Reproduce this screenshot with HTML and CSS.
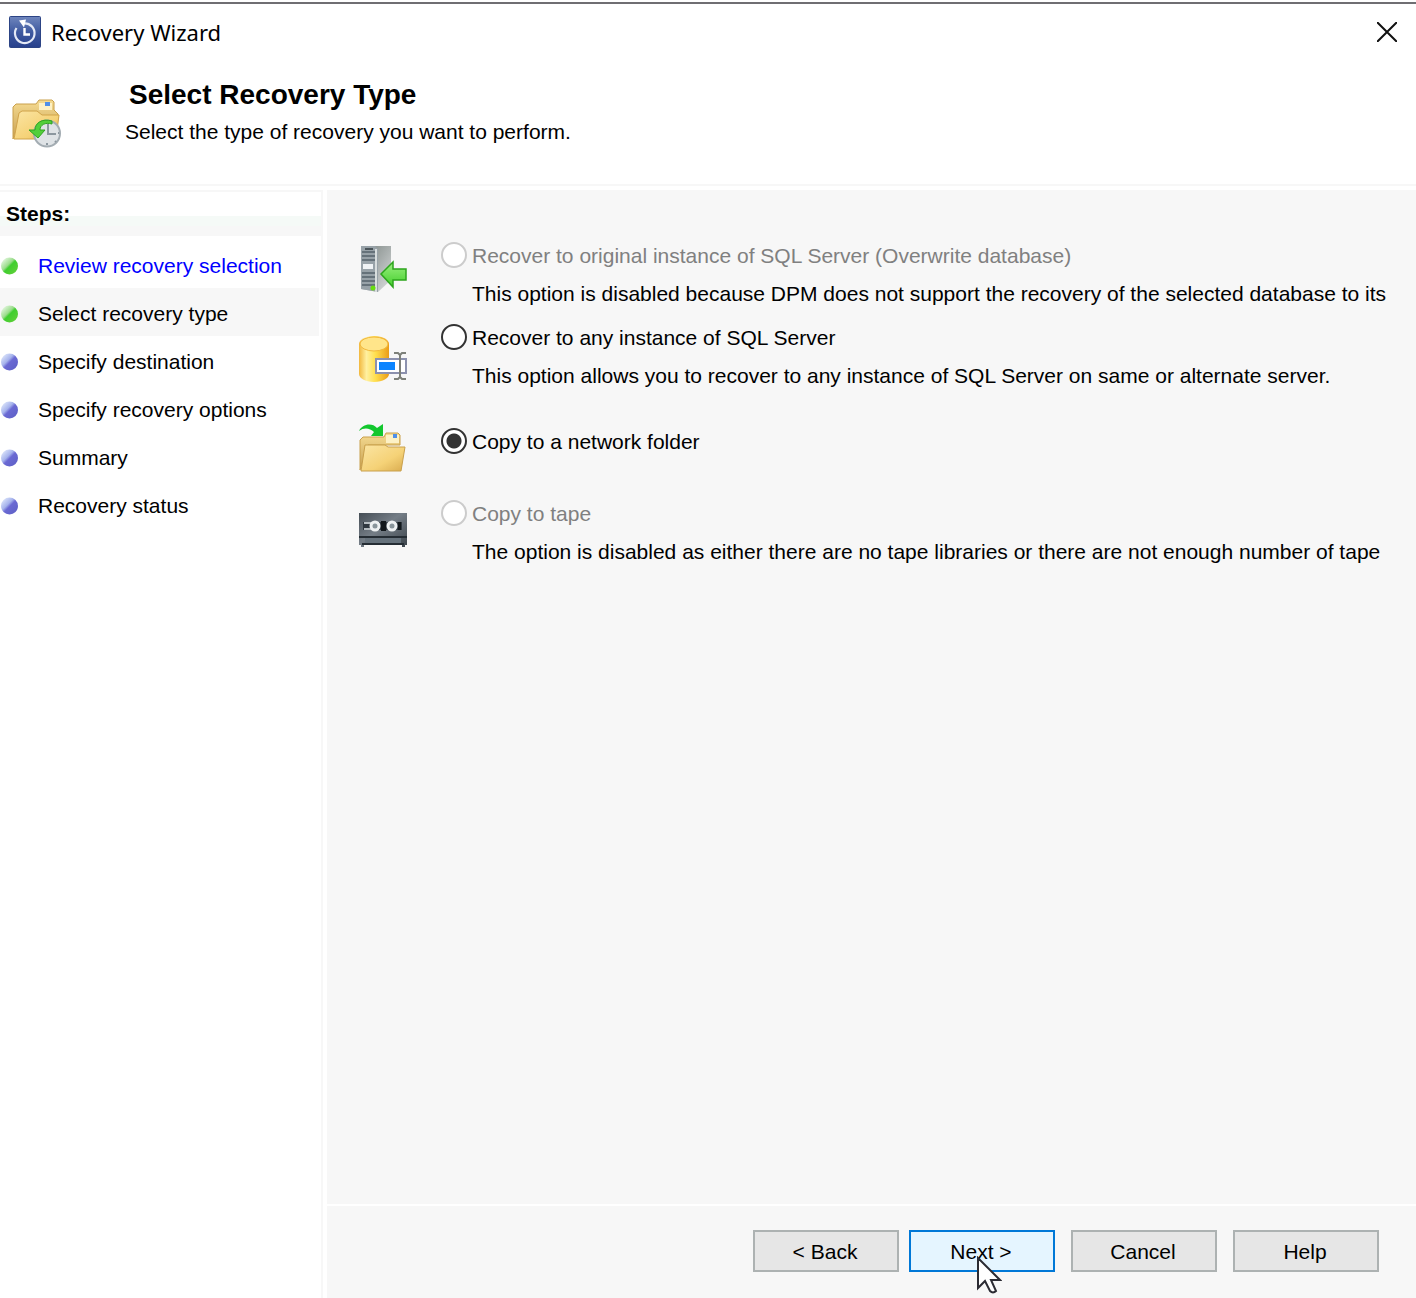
FILE: index.html
```html
<!DOCTYPE html>
<html lang="en">
<head>
<meta charset="utf-8">
<title>Recovery Wizard</title>
<link rel="stylesheet" href="styles.css">
</head>
<body>
<svg class="defs" width="0" height="0" aria-hidden="true">
  <defs>
    <linearGradient id="navy" x1="0" y1="0" x2="0" y2="1"><stop offset="0" stop-color="#6f86bd"/><stop offset=".5" stop-color="#3f5aa0"/><stop offset="1" stop-color="#27408c"/></linearGradient>
    <linearGradient id="folder" x1="0" y1="0" x2="1" y2="1"><stop offset="0" stop-color="#fbe5a4"/><stop offset=".6" stop-color="#f5d277"/><stop offset="1" stop-color="#d9ab4e"/></linearGradient>
    <linearGradient id="folder-back" x1="0" y1="0" x2="0" y2="1"><stop offset="0" stop-color="#f6dc92"/><stop offset="1" stop-color="#c79f51"/></linearGradient>
    <linearGradient id="arrow" x1="0" y1="0" x2="0" y2="1"><stop offset="0" stop-color="#9bf080"/><stop offset="1" stop-color="#44cf2c"/></linearGradient>
    <linearGradient id="gold" x1="0" y1="0" x2="1" y2="0"><stop offset="0" stop-color="#f2b83e"/><stop offset=".25" stop-color="#fff0a0"/><stop offset=".55" stop-color="#ffdf4e"/><stop offset="1" stop-color="#eb9c17"/></linearGradient>
    <linearGradient id="steel" x1="0" y1="0" x2="1" y2="1"><stop offset="0" stop-color="#79827f"/><stop offset=".5" stop-color="#a9afae"/><stop offset="1" stop-color="#dde0e0"/></linearGradient>
    <linearGradient id="tape" x1="0" y1="0" x2="1" y2="1"><stop offset="0" stop-color="#454d55"/><stop offset=".45" stop-color="#747d86"/><stop offset="1" stop-color="#3b434a"/></linearGradient>
    <linearGradient id="green-ball" x1="0" y1="0" x2="1" y2="1"><stop offset=".1" stop-color="#e6f8e2"/><stop offset=".42" stop-color="#9bdc8c"/><stop offset=".52" stop-color="#3fce2f"/><stop offset="1" stop-color="#69d03c"/></linearGradient>
    <linearGradient id="blue-ball" x1="0" y1="0" x2="1" y2="1"><stop offset=".1" stop-color="#dde6fb"/><stop offset=".4" stop-color="#a5b2ec"/><stop offset=".52" stop-color="#6a69d3"/><stop offset="1" stop-color="#5c5fc4"/></linearGradient>
    <symbol id="done" viewBox="0 0 18 18"><circle cx="9.500" cy="9" r="8.500" fill="url(#green-ball)"/></symbol>
    <symbol id="todo" viewBox="0 0 18 18"><circle cx="9.500" cy="9" r="8.500" fill="url(#blue-ball)"/></symbol>
  </defs>
</svg>
<div class="wizard">
  <header class="titlebar">
    <svg class="app-icon" viewBox="0 0 32 32" aria-hidden="true">
      <rect x=".5" y=".5" width="31" height="31" rx="1" fill="url(#navy)" stroke="#2c4485"/>
      <path d="M7.500 12A9.800 9.800 0 1 0 15 7.500h3A9.800 9.800 0 0 1 25 14" fill="none" stroke="#e4e9f6" stroke-width="2.200"/>
      <path d="M10 4.500l7-1-2 8z" fill="#fff"/>
      <path d="M15.500 12v6.500H21" fill="none" stroke="#fff" stroke-width="2.400"/>
    </svg>
    <span class="title">Recovery Wizard</span>
    <button class="close" type="button" aria-label="Close">
      <svg viewBox="0 0 20 20" width="20" height="20"><path d="M0 0L20 20M20 0L0 20" stroke="#111" stroke-width="2"/></svg>
    </button>
  </header>
  <section class="banner">
    <svg class="banner-icon" viewBox="0 0 50 50" aria-hidden="true">
      <path d="M1 40V8l3-3h20l3-4h13l2 2v8l4 4v5H8z" fill="url(#folder-back)" stroke="#c9a04c"/>
      <path d="M27 4h13v7H27z" fill="#fdf1c6"/><path d="M33 3h5v4h-5z" fill="#4f8fe8"/>
      <path d="M2 40L7 14l3-2h15l5 4h17l-3 24z" fill="url(#folder)" stroke="#d1a44b"/>
      <circle cx="35" cy="34.500" r="13" fill="#dfe3e6" stroke="#a4adb3" stroke-width="2"/>
      <path d="M36 25v10h8" fill="none" stroke="#8c979f" stroke-width="2"/>
      <path d="M35 44v2M43 42l1 1M46 34h1" stroke="#8c979f" stroke-width="2"/>
      <path d="M40 22c-10-3-17 2-17 9h-6l9 8 7-8h-5c0-5 5-8 12-6z" fill="#52cf3a" stroke="#2ea31f"/>
    </svg>
    <div class="banner-text">
      <h1>Select Recovery Type</h1>
      <p>Select the type of recovery you want to perform.</p>
    </div>
  </section>
  <div class="body">
    <nav class="steps" aria-label="Steps">
      <h2>Steps:</h2>
      <ol>
        <li><svg class="ball"><use href="#done"/></svg><a href="#review">Review recovery selection</a></li>
        <li class="current" aria-current="step"><svg class="ball"><use href="#done"/></svg>Select recovery type</li>
        <li><svg class="ball"><use href="#todo"/></svg>Specify destination</li>
        <li><svg class="ball"><use href="#todo"/></svg>Specify recovery options</li>
        <li><svg class="ball"><use href="#todo"/></svg>Summary</li>
        <li><svg class="ball"><use href="#todo"/></svg>Recovery status</li>
      </ol>
    </nav>
    <main class="page">
      <form class="content">
        <div class="icons" aria-hidden="true">
          <svg viewBox="0 0 48 48">
            <path d="M2 0h30v34L19 46 2 43z" fill="url(#steel)"/>
            <path d="M2 0h14l3 3v43L2 43z" fill="#98a2a8"/>
            <path d="M3 6h13M3 10h13M3 14h13M3 27h13M3 31h13M3 35h13M3 39h13" stroke="#66727a" stroke-width="2"/>
            <path d="M4 18h10v5H4z" fill="#f0f3f5"/><path d="M6 2h8v2H6z" fill="#4a5459"/>
            <path d="M16 3h2v43h-2z" fill="#d9dede"/>
            <circle cx="14" cy="42" r="2.500" fill="#67dd10"/>
            <path d="M22 28L34 16v7h13v11H34v7z" fill="url(#arrow)" stroke="#2da51d" stroke-width="1.500"/>
          </svg>
          <svg viewBox="0 0 48 48">
            <path d="M0 9c0-4 6-8 15-8s15 4 15 8v30c0 4-6 8-15 8S0 43 0 39z" fill="url(#gold)"/>
            <ellipse cx="15" cy="9" rx="14" ry="7" fill="#ffe58a" stroke="#f2b83c"/>
            <path d="M17 24h30v14H17z" fill="#fff" stroke="#8c91ae" stroke-width="2"/>
            <path d="M20 27h16v8H20z" fill="#0a84ff"/>
            <path d="M35 18h4l2 2 2-2h4M35 44h4l2-2 2 2h4M41 20v22" fill="none" stroke="#7d8079" stroke-width="2"/>
          </svg>
          <svg viewBox="0 0 48 48">
            <path d="M0 7C3 0 13-2 18 4l6-4v12H12l3-4C11 4 5 3 0 7z" fill="#12c72e"/>
            <path d="M1 46V16l3-3h21l2-4h12l2 2v10H9z" fill="url(#folder-back)" stroke="#c9a04c"/>
            <path d="M27 11h13v8H27z" fill="#fdf1c6"/><path d="M34 10h4v4h-4z" fill="#4f8fe8"/>
            <path d="M2 47L6 21h20l3 2h17l-4 24z" fill="url(#folder)" stroke="#c9a04c"/>
          </svg>
          <svg viewBox="0 0 48 48">
            <path d="M0 0h48v32h-2v2h-3v-2H5v2H2v-2H0z" fill="url(#tape)"/>
            <path d="M4 9h39v8H4z" fill="#303840"/><path d="M5 10h7M5 16h7" stroke="#b6bdc2" stroke-width="2"/>
            <circle cx="16" cy="13" r="4" fill="#88949a" stroke="#eef1f2" stroke-width="3"/>
            <circle cx="33" cy="13" r="4" fill="#88949a" stroke="#eef1f2" stroke-width="3"/>
            <path d="M22 8h5v10h-5zM39 9h3v8h-3z" fill="#12181c"/>
            <path d="M6 25h36v5H6z" fill="#66727c"/><path d="M0 24h48M3 31h42" stroke="#252d34" stroke-width="2"/>
          </svg>
        </div>
        <div class="options">
          <div class="option">
            <input type="radio" name="target" id="original" disabled>
            <label for="original">Recover to original instance of SQL Server (Overwrite database)</label>
            <p>This option is disabled because DPM does not support the recovery of the selected database to its</p>
          </div>
          <div class="option">
            <input type="radio" name="target" id="any">
            <label for="any">Recover to any instance of SQL Server</label>
            <p>This option allows you to recover to any instance of SQL Server on same or alternate server.</p>
          </div>
          <div class="option simple">
            <input type="radio" name="target" id="network" checked>
            <label for="network">Copy to a network folder</label>
          </div>
          <div class="option">
            <input type="radio" name="target" id="tape-copy" disabled>
            <label for="tape-copy">Copy to tape</label>
            <p>The option is disabled as either there are no tape libraries or there are not enough number of tape</p>
          </div>
        </div>
      </form>
      <footer class="actions">
        <button type="button">&lt; Back</button>
        <button type="button" class="next">Next &gt;
          <svg class="cursor" viewBox="0 0 26 40" aria-hidden="true"><path d="M2 2v30l7-7 5 10q3 3 6 0l-5-11h9z" fill="#fff" stroke="#2b2b33" stroke-width="2"/></svg>
        </button>
        <button type="button">Cancel</button>
        <button type="button">Help</button>
      </footer>
    </main>
  </div>
</div>
</body>
</html>
```
FILE: styles.css
```css
* { box-sizing: border-box; }

body {
  margin: 0;
  background: #fff;
  color: #000;
  font: 21px/36px "Liberation Sans", Arial, sans-serif;
}

h1, h2, p, ol { margin: 0; padding: 0; }

.defs { position: absolute; }

.wizard {
  display: flex;
  flex-direction: column;
  min-height: 100vh;
  padding-top: 2px;
}

.titlebar {
  display: flex;
  align-items: center;
  gap: 10px;
  height: 58px;
  padding: 0 19px 0 9px;
  border-top: 2px solid #6f6e72;
}

.app-icon { width: 32px; height: 32px; }

.title { font-family: "Noto Sans", "Open Sans", sans-serif; font-size: 22px; }

.close {
  display: flex;
  margin-left: auto;
  padding: 0;
  border: 0;
  background: none;
}

.banner {
  display: flex;
  gap: 63px;
  height: 126px;
  padding: 16px 12px 0;
  border-bottom: 2px solid #f7f7f7;
}

.banner-icon { width: 50px; height: 50px; margin-top: 23px; }

h1 {
  padding-left: 4px;
  font-size: 28px;
  line-height: 38px;
}

.body {
  display: flex;
  flex: 1;
  gap: 4px;
  padding-top: 4px;
}

.steps {
  flex: none;
  width: 323px;
  border: solid #f7f7f7;
  border-width: 2px 2px 0 0;
}

h2 {
  height: 44px;
  padding: 4px 6px;
  background: linear-gradient(#fff 24px, #f5faf7 24px, #f5faf7 34px, #f7f7f7 34px);
  font-size: 21px;
}

ol { padding: 4px 2px 0 0; list-style: none; }

li {
  display: flex;
  align-items: center;
  gap: 20px;
  height: 48px;
  padding-top: 3px;
}

li a { color: #00f; text-decoration: none; }

.current { background: #f7f7f7; }

.ball { width: 18px; height: 18px; }

.page {
  display: flex;
  flex: 1;
  flex-direction: column;
  min-width: 0;
  background: #f7f7f7;
}

.content {
  display: flex;
  flex: 1;
  gap: 34px;
  padding: 46px 0 0 32px;
  overflow: hidden;
}

.icons {
  display: flex;
  flex: none;
  flex-direction: column;
  gap: 41px;
  padding-top: 10px;
}

.icons svg { width: 48px; height: 48px; overflow: visible; }

.options { display: flex; flex-direction: column; gap: 6px; white-space: nowrap; }

.option {
  display: grid;
  grid-template-columns: 26px auto;
  column-gap: 5px;
}

.simple { padding: 22px 0 26px; }

.option label { line-height: 40px; }

.option p { grid-column: 2; }

input[type="radio"] {
  appearance: none;
  width: 26px;
  height: 26px;
  margin: 6px 0 0;
  border: 2px solid #333;
  border-radius: 50%;
  background: #fff;
}

input[type="radio"]:checked { background: radial-gradient(circle, #333 7px, #fff 8px); }

input[type="radio"]:disabled { border-color: #ccc; }

input:disabled + label { color: #808080; }

.actions {
  display: flex;
  justify-content: flex-end;
  gap: 16px;
  padding: 24px 37px 26px;
  border-top: 2px solid #fff;
}

.actions button {
  width: 146px;
  height: 42px;
  padding: 2px 2px 0 0;
  border: 2px solid #adb2b2;
  background: #e6e6e6;
  color: #000;
  font: inherit;
}

.actions .next {
  position: relative;
  margin-left: -6px;
  border-color: #0078d7;
  background: #e5f5ff;
}

.cursor {
  position: absolute;
  top: 24px;
  left: 65px;
  width: 26px;
  height: 40px;
}
```
